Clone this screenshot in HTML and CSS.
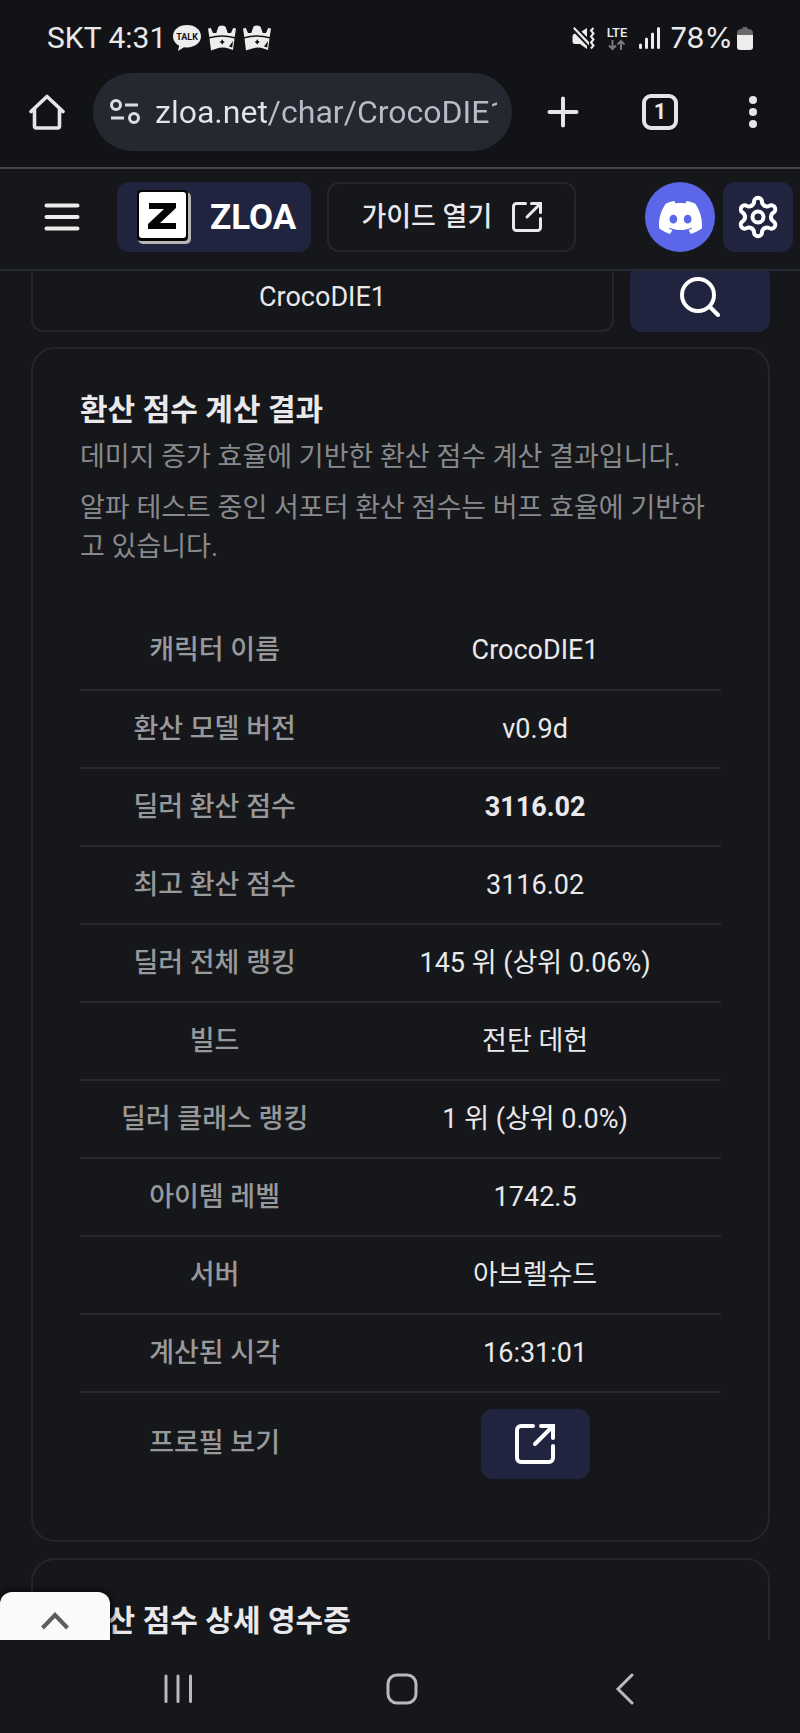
FILE: index.html
```html
<!DOCTYPE html>
<html lang="ko">
<head>
<meta charset="utf-8">
<meta name="viewport" content="width=device-width, initial-scale=1">
<title>ZLOA - CrocoDIE1</title>
<link rel="stylesheet" href="styles.css">
</head>
<body>
<svg class="defs" aria-hidden="true">
  <symbol id="crown" viewBox="0 0 28 26">
    <path fill="#ededee" d="M0 3.500L2.800 3L5 8H8.300L10.300 2Q11 .5 14 .5T17.700 2L19.700 8H23L25.200 3L28 3.500L26.700 12Q14 8.500 1.300 12Z"/>
    <path fill="#ededee" d="M1.500 13.500Q14 10 26.500 13.500L25 25L20.500 23.500Q14 21.500 7.500 24L3 25.500Z"/>
    <path fill="#121317" d="M14.200 14.300l1 1.700 1.700 1-1.700 1-1 1.700-1-1.700-1.700-1 1.700-1zM21 21.500l4-5.500-.8 6.500z"/>
  </symbol>
  <symbol id="external" viewBox="0 0 40 40">
    <g fill="none" stroke="currentColor" stroke-width="4" stroke-linecap="round">
      <path d="M18 2H6a4 4 0 0 0-4 4v28a4 4 0 0 0 4 4h28a4 4 0 0 0 4-4V22"/>
      <path d="M26 2H38V14M37 3L20 20"/>
    </g>
  </symbol>
</svg>

<div class="status">
  <div class="status-group">
    <span class="status-text">SKT 4:31</span>
    <svg width="28" height="26" viewBox="0 0 28 26"><path fill="#ededee" d="M14 0C6 0 0 4.800 0 11.200c0 4 2.400 7.500 6.200 9.500L5 26l6-3.800c1 .2 2 .2 3 .2 8 0 14-4.800 14-11.200S22 0 14 0z"/><text class="talk" x="14" y="15" text-anchor="middle">TALK</text></svg>
    <svg width="28" height="26"><use href="#crown"/></svg>
    <svg width="28" height="26"><use href="#crown"/></svg>
  </div>
  <div class="status-group status-right">
    <svg width="23" height="23" viewBox="0 0 23 23"><path fill="#ededee" d="M3 6.500l12 12.500v3L8 17H3q-2.500 0-2.500-2.500V9Q.5 7 3 6.500zM9.500 4.500L15 1v9zM1 1.500L2.500 0 17 15v3.500z"/><path fill="none" stroke="#ededee" stroke-width="2" d="M21.500 1l-2.500 2.500 2.500 3-2.500 3 2.500 3-2.500 3 2.500 3-2.500 3"/></svg>
    <svg width="24" height="26" viewBox="0 0 24 26"><text class="lte" x="12" y="12" text-anchor="middle">LTE</text><path fill="none" stroke="#77787b" stroke-width="2" d="M7.500 15v9M4 20.500L7.500 24 11 20.500M16 25v-9M12.500 19.500L16 16l3.500 3.500"/></svg>
    <svg width="22" height="22" viewBox="0 0 22 22"><g fill="none" stroke="#ededee" stroke-width="3" stroke-linecap="round"><path d="M1.500 18v2.500M7.500 12v8.500M13.500 7v13.500M19.500 1.500v19"/></g></svg>
    <span class="status-percent"><span class="percent-text">78%</span>
    <svg width="16" height="23" viewBox="0 0 16 23"><path fill="#68696c" d="M5 2q0-2 2-2h2q2 0 2 2 5 0 5 4v4H0V6q0-4 5-4z"/><path fill="#ededee" d="M0 8h16v12q0 3-3 3H3q-3 0-3-3z"/></svg></span>
  </div>
</div>

<div class="browser">
  <button class="icon-btn home" aria-label="홈"><svg width="36" height="36" viewBox="0 0 36 36"><path fill="none" stroke="currentColor" stroke-width="3.600" stroke-linecap="round" stroke-linejoin="round" d="M2 17.500L18 2.500l16 15M5.500 14.500V32q0 2 2 2h21q2 0 2-2V14.500"/></svg></button>
  <div class="url">
    <svg width="30" height="26" viewBox="0 0 30 26"><g fill="none" stroke="#dcdde3" stroke-width="3"><circle cx="6" cy="6" r="4.500"/><circle cx="24" cy="19" r="4.500"/><path d="M15 6h13M1 19h13"/></g></svg>
    <input class="url-input" type="text" aria-label="주소" value="zloa.net/char/CrocoDIE1">
  </div>
  <button class="icon-btn plus" aria-label="새 탭"><svg width="32" height="32" viewBox="0 0 32 32"><path fill="none" stroke="currentColor" stroke-width="4" stroke-linecap="round" d="M16 2.500v27M2.500 16h27"/></svg></button>
  <button class="icon-btn tabs" aria-label="탭 1개">1</button>
  <button class="icon-btn more" aria-label="더보기"><svg width="8" height="32" viewBox="0 0 8 32"><g fill="currentColor"><circle cx="4" cy="4" r="4"/><circle cx="4" cy="16" r="4"/><circle cx="4" cy="28" r="4"/></g></svg></button>
</div>

<header class="header">
  <button class="icon-btn menu" aria-label="메뉴"><svg width="36" height="30" viewBox="0 0 36 30"><path fill="none" stroke="currentColor" stroke-width="4" stroke-linecap="round" d="M2.500 3.500h31M2.500 15h31M2.500 26.500h31"/></svg></button>
  <a class="brand" href="#">
    <svg width="54" height="54" viewBox="0 0 54 54"><rect x="1" y="2" width="53" height="52" rx="5" fill="#b5b5b5"/><rect width="51" height="51" rx="4" fill="#050505"/><rect x="2" y="2" width="47" height="46" rx="3" fill="#fff"/><path fill="#050505" d="M12 13H39V18L23 33H39V39H11V34L27 19H12Z"/></svg>
    <span>ZLOA</span>
  </a>
  <a class="guide" href="#">가이드 열기 <svg width="30" height="30"><use href="#external"/></svg></a>
  <a class="discord" href="#" aria-label="Discord"><svg width="43" height="43" viewBox="0 0 24 24"><path fill="#fff" d="M20.317 4.3698a19.7913 19.7913 0 00-4.8851-1.5152.0741.0741 0 00-.0785.0371c-.211.3753-.4447.8648-.6083 1.2495-1.8447-.2762-3.68-.2762-5.4868 0-.1636-.3933-.4058-.8742-.6177-1.2495a.077.077 0 00-.0785-.037 19.7363 19.7363 0 00-4.8852 1.515.0699.0699 0 00-.0321.0277C.5334 9.0458-.319 13.5799.0992 18.0578a.0824.0824 0 00.0312.0561c2.0528 1.5076 4.0413 2.4228 5.9929 3.0294a.0777.0777 0 00.0842-.0276c.4616-.6304.8731-1.2952 1.226-1.9942a.076.076 0 00-.0416-.1057c-.6528-.2476-1.2743-.5495-1.8722-.8923a.077.077 0 01-.0076-.1277c.1258-.0943.2517-.1923.3718-.2914a.0743.0743 0 01.0776-.0105c3.9278 1.7933 8.18 1.7933 12.0614 0a.0739.0739 0 01.0785.0095c.1202.099.246.1981.3728.2924a.077.077 0 01-.0066.1276 12.2986 12.2986 0 01-1.873.8914.0766.0766 0 00-.0407.1067c.3604.698.7719 1.3628 1.225 1.9932a.076.076 0 00.0842.0286c1.961-.6067 3.9495-1.5219 6.0023-3.0294a.077.077 0 00.0313-.0552c.5004-5.177-.8382-9.6739-3.5485-13.6604a.061.061 0 00-.0312-.0286zM8.02 15.3312c-1.1825 0-2.1569-1.0857-2.1569-2.419 0-1.3332.9555-2.4189 2.157-2.4189 1.2108 0 2.1757 1.0952 2.1568 2.419 0 1.3332-.9555 2.4189-2.1569 2.4189zm7.9748 0c-1.1825 0-2.1569-1.0857-2.1569-2.419 0-1.3332.9554-2.4189 2.1569-2.4189 1.2108 0 2.1757 1.0952 2.1568 2.419 0 1.3332-.946 2.4189-2.1568 2.4189Z"/></svg></a>
  <button class="settings" aria-label="설정"><svg width="44" height="44" viewBox="-22 -22 44 44"><g fill="none" stroke="#fff" stroke-width="4" stroke-linecap="round"><path id="lobe" d="M-6.500-11.300C-4.600-12.400-4-13.500-4-15.300A4 4 0 0 1 4-15.300C4-13.500 4.600-12.400 6.500-11.300"/><use href="#lobe" transform="rotate(60)"/><use href="#lobe" transform="rotate(120)"/><use href="#lobe" transform="rotate(180)"/><use href="#lobe" transform="rotate(240)"/><use href="#lobe" transform="rotate(300)"/><circle r="5.500"/></g></svg></button>
</header>

<main class="page">
  <form class="search">
    <input class="search-input" type="text" aria-label="캐릭터 이름" value="CrocoDIE1">
    <button class="search-btn" type="button" aria-label="검색"><svg width="40" height="40" viewBox="0 0 40 40"><g fill="none" stroke="#fff" stroke-width="4" stroke-linecap="round"><circle cx="18" cy="18" r="16"/><path d="M30 30l8 8"/></g></svg></button>
  </form>

  <section class="card">
    <h2>환산 점수 계산 결과</h2>
    <p>데미지 증가 효율에 기반한 환산 점수 계산 결과입니다.</p>
    <p>알파 테스트 중인 서포터 환산 점수는 버프 효율에 기반하고 있습니다.</p>
    <table class="result">
      <tbody>
        <tr><th scope="row">캐릭터 이름</th><td>CrocoDIE1</td></tr>
        <tr><th scope="row">환산 모델 버전</th><td>v0.9d</td></tr>
        <tr><th scope="row">딜러 환산 점수</th><td><strong>3116.02</strong></td></tr>
        <tr><th scope="row">최고 환산 점수</th><td>3116.02</td></tr>
        <tr><th scope="row">딜러 전체 랭킹</th><td>145 위 (상위 0.06%)</td></tr>
        <tr><th scope="row">빌드</th><td>전탄 데헌</td></tr>
        <tr><th scope="row">딜러 클래스 랭킹</th><td>1 위 (상위 0.0%)</td></tr>
        <tr><th scope="row">아이템 레벨</th><td>1742.5</td></tr>
        <tr><th scope="row">서버</th><td>아브렐슈드</td></tr>
        <tr><th scope="row">계산된 시각</th><td>16:31:01</td></tr>
        <tr class="profile-row"><th scope="row">프로필 보기</th><td><a class="profile" href="#" aria-label="프로필 보기"><svg width="40" height="40"><use href="#external"/></svg></a></td></tr>
      </tbody>
    </table>
  </section>

  <section class="card">
    <h2>환산 점수 상세 영수증</h2>
  </section>

  <button class="drawer" aria-label="펼치기"><svg width="28" height="18" viewBox="0 0 28 18"><path fill="none" stroke="#5d5d5f" stroke-width="4" d="M1.500 16L14 3l12.500 13"/></svg></button>
</main>

<nav class="navbar">
  <button class="nav-btn" aria-label="최근 앱"><svg width="30" height="32" viewBox="0 0 30 32"><path fill="none" stroke="currentColor" stroke-width="3" stroke-linecap="round" d="M3 3v25.500M15 3v25.500M27.500 3v25.500"/></svg></button>
  <button class="nav-btn" aria-label="홈"><svg width="32" height="32" viewBox="0 0 32 32"><rect x="2" y="2" width="28" height="28" rx="9" fill="none" stroke="currentColor" stroke-width="3"/></svg></button>
  <button class="nav-btn" aria-label="뒤로"><svg width="20" height="32" viewBox="0 0 20 32"><path fill="none" stroke="currentColor" stroke-width="3" stroke-linecap="round" d="M17 2L3 16l14 14"/></svg></button>
</nav>
</body>
</html>
```

FILE: styles.css
```css
* {
  box-sizing: border-box;
}

body {
  margin: 0;
  height: 100vh;
  display: flex;
  flex-direction: column;
  background: #121317;
  color: #e9e9eb;
  font-family: Roboto, "Noto Sans CJK KR", sans-serif;
  font-size: 27px;
}

svg {
  display: block;
  flex: none;
}

button,
input {
  font: inherit;
  color: inherit;
  border: 0;
  padding: 0;
  background: none;
}

a {
  color: inherit;
  text-decoration: none;
}

.defs {
  position: absolute;
  width: 0;
  height: 0;
}

.status {
  display: flex;
  justify-content: space-between;
  align-items: center;
  height: 73px;
  padding: 3px 47px 0;
}

.status-group {
  display: flex;
  align-items: center;
  gap: 7px;
}

.status-right {
  gap: 10px;
}

.status-percent {
  display: flex;
  align-items: center;
  gap: 4px;
}

.status-text {
  font-size: 30px;
  line-height: 36px;
}

.percent-text {
  font-family: Inter, sans-serif;
  font-size: 29px;
  line-height: 36px;
}

.talk {
  font: 700 9px Roboto, sans-serif;
  fill: #121317;
}

.lte {
  font: 500 13px Roboto, sans-serif;
  fill: #ededee;
}

.browser {
  display: flex;
  align-items: center;
  height: 96px;
  padding: 0 29px 16px;
  border-bottom: 2px solid #434448;
}

.icon-btn {
  display: flex;
  justify-content: center;
  align-items: center;
  flex: none;
  color: #e4e5e9;
}

.url {
  flex: 1;
  min-width: 0;
  display: flex;
  align-items: center;
  gap: 15px;
  height: 78px;
  margin-left: 28px;
  padding: 0 15px 0 17px;
  border-radius: 39px;
  background: #262831;
}

.url-input {
  flex: 1;
  min-width: 0;
  height: 48px;
  font-size: 32px;
  color: transparent;
  background: linear-gradient(90deg, #e2e3eb 114px, #b9bcc6 114px);
  background-clip: text;
  -webkit-background-clip: text;
}

.plus {
  margin-left: 35px;
}

.tabs {
  width: 36px;
  height: 36px;
  margin-left: 63px;
  border: 4px solid #e4e5e9;
  border-radius: 9px;
  font-size: 22px;
  font-weight: 700;
  line-height: 24px;
}

.more {
  margin: 0 14px 0 71px;
}

.header {
  display: flex;
  align-items: center;
  height: 102px;
  padding: 0 7px 4px 44px;
  background: #16171b;
  border-bottom: 2px solid #262833;
}

.menu {
  color: #ededee;
}

.brand,
.guide,
.discord,
.settings,
.search-btn,
.profile {
  display: flex;
  justify-content: center;
  align-items: center;
  height: 70px;
  border-radius: 12px;
}

.brand {
  gap: 19px;
  margin-left: 37px;
  padding: 0 15px 0 20px;
  background: #20243e;
  color: #fff;
  font-size: 35px;
  font-weight: 700;
}

.guide {
  gap: 20px;
  margin-left: 16px;
  padding: 0 32px;
  border: 2px solid #25262c;
  font-weight: 500;
  line-height: 39px;
}

.discord {
  width: 70px;
  margin-left: auto;
  border-radius: 50%;
  background: #5b67e8;
}

.settings {
  width: 70px;
  margin-left: 8px;
  background: #20243e;
}

.page {
  position: relative;
  flex: 1;
  min-height: 0;
  overflow: hidden;
  padding: 0 30px 0 31px;
  background: #16171b;
}

.search {
  display: flex;
  gap: 16px;
  margin: -9px 0 15px;
}

.search-input {
  flex: 1;
  min-width: 0;
  height: 70px;
  border: 2px solid #25262c;
  border-radius: 12px;
  text-align: center;
}

.search-btn {
  width: 140px;
  background: #20243e;
}

.card {
  margin-bottom: 16px;
  padding: 40px 47px 46px;
  border: 2px solid #25262c;
  border-radius: 24px;
}

.card h2 {
  margin: 0 0 7px;
  font-size: 30px;
  line-height: 42px;
  font-weight: 700;
}

.card p {
  margin: 0 0 12px;
  line-height: 39px;
  color: #88898c;
}

.result {
  width: 100%;
  margin-top: 45px;
  border-collapse: collapse;
  table-layout: fixed;
  line-height: 39px;
}

.result th,
.result td {
  height: 78px;
  padding: 0;
  text-align: center;
  border-bottom: 2px solid #262731;
}

.result th {
  width: 42%;
  font-weight: 500;
  color: #98999b;
}

.result .profile-row th,
.result .profile-row td {
  height: 102px;
  border-bottom: 0;
}

.profile {
  width: 109px;
  margin: 0 auto;
  background: #20243e;
  color: #fff;
}

.drawer {
  position: absolute;
  left: 0;
  bottom: 0;
  display: flex;
  justify-content: center;
  align-items: center;
  width: 110px;
  height: 48px;
  padding-top: 10px;
  border-radius: 12px 12px 0 0;
  background: #fafafa;
  box-shadow: 0 0 8px #000000;
}

.navbar {
  display: flex;
  justify-content: center;
  align-items: center;
  height: 93px;
  padding: 4px 0 0 3px;
  background: #16171b;
}

.nav-btn {
  display: flex;
  justify-content: center;
  width: 28%;
  color: #b9babd;
}
```
